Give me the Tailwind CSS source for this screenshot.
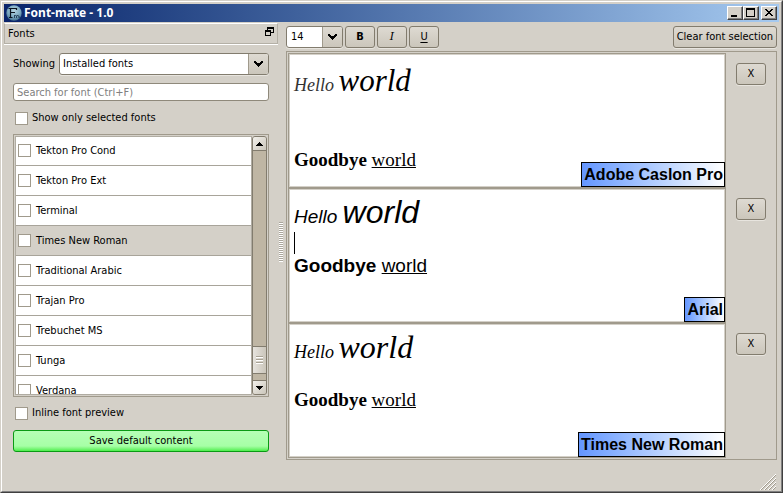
<!DOCTYPE html>
<html lang="en">
<head>
<meta charset="utf-8">
<meta name="viewport" content="width=device-width, initial-scale=1">
<title>Font-mate - 1.0</title>
<script src="https://cdn.jsdelivr.net/npm/@tailwindcss/browser@4"></script>
</head>
<body class="h-screen overflow-hidden bg-[#d4d0c8] font-['DejaVu_Sans_Condensed','DejaVu_Sans',sans-serif] text-[11px] leading-[14px] text-black">
<div class="flex h-full flex-col border border-t-[#d4d0c8] border-r-[#404040] border-b-[#404040] border-l-[#d4d0c8]">
<div class="flex min-h-0 flex-1 flex-col border border-t-white border-r-[#808080] border-b-[#808080] border-l-white px-[2px] pt-[2px]">

  <header class="flex h-[18px] shrink-0 items-center bg-linear-to-r from-[#0a246a] to-[#a6caf0] pr-[2px] pl-[2px]">
    <svg class="h-4 w-4 shrink-0" viewBox="0 0 16 16" aria-hidden="true">
      <defs><radialGradient id="orb" cx="50%" cy="35%" r="65%"><stop offset="0" stop-color="#b4d2e0"/><stop offset="0.6" stop-color="#7eabc2"/><stop offset="1" stop-color="#44708f"/></radialGradient></defs>
      <circle cx="8" cy="8" r="7.7" fill="url(#orb)"/>
      <path d="M2.500 3.500H10.500M4.500 3.500V12.500M3 12.500H6.500M4.500 7.500H9M10.500 3V5" fill="none" stroke="#0b1420" stroke-width="1.200"/>
      <path d="M8.500 13V10M8.500 11Q10 9.500 10.500 11V13M10.500 11Q12.500 9.500 12.800 11V12.500L14 12" fill="none" stroke="#16304a" stroke-width="0.800"/>
    </svg>
    <h1 class="ml-[2px] flex-1 font-['Noto_Sans',sans-serif] text-[12px] leading-[18px] font-bold text-white">Font-mate - 1.0</h1>
    <button aria-label="Minimize" class="flex h-[14px] w-4 items-center justify-center border border-t-white border-r-[#404040] border-b-[#404040] border-l-white bg-[#d4d0c8] shadow-[inset_-1px_-1px_#808080]">
      <svg class="h-3 w-[14px]" viewBox="0 0 14 12"><path d="M3 8h6v2H3z"/></svg></button>
    <button aria-label="Maximize" class="flex h-[14px] w-4 items-center justify-center border border-t-white border-r-[#404040] border-b-[#404040] border-l-white bg-[#d4d0c8] shadow-[inset_-1px_-1px_#808080]">
      <svg class="h-3 w-[14px]" viewBox="0 0 14 12"><path fill-rule="evenodd" d="M2 1h9v9H2zM3 3v6h7V3z"/></svg></button>
    <button aria-label="Close" class="ml-[2px] flex h-[14px] w-4 items-center justify-center border border-t-white border-r-[#404040] border-b-[#404040] border-l-white bg-[#d4d0c8] shadow-[inset_-1px_-1px_#808080]">
      <svg class="h-3 w-[14px]" viewBox="0 0 14 12" shape-rendering="crispEdges"><path d="M3 2h2v1h1v1h2V3h1V2h2v1h-1v1H9v1H8v1h1v1h1v1h1v1H9V8H8V7H6v1H5v1H3V8h1V7h1V6h1V5H5V4H4V3H3z"/></svg></button>
  </header>

  <div class="flex min-h-0 flex-1 pt-px">
    <aside class="flex w-[274px] shrink-0 flex-col">
      <div class="flex h-[21px] shrink-0 items-center justify-between border border-[#b4b0a6] border-t-white pr-[3px] pl-[3px] shadow-[0_1px_white]">
        <h2>Fonts</h2>
        <button aria-label="Float panel" class="pb-1"><svg class="h-[9px] w-[9px]" viewBox="0 0 9 9" shape-rendering="crispEdges"><path fill-rule="evenodd" d="M2 0h7v6H6V5h2V2H3v1H2zM0 3h6v6H0zM1 5v3h4V5z"/></svg></button>
      </div>

      <div class="flex min-h-0 flex-1 flex-col px-[9px] pt-[9px] pb-[39px]">
        <div class="flex h-[22px] shrink-0 items-center">
          <label for="showing" class="w-[46px] shrink-0">Showing</label>
          <div class="relative h-full flex-1">
            <select id="showing" class="h-full w-full appearance-none rounded-[3px] border border-[#827c6e] bg-white pr-6 pl-[3px] text-[11px] shadow-[0_1px_#e8e5df]"><option>Installed fonts</option></select>
            <span class="pointer-events-none absolute inset-y-px right-px flex w-5 items-center justify-center rounded-r-[2px] border-l border-[#a09a8c] bg-linear-to-b from-[#dedad2] to-[#cbc6bb]"><svg class="h-[6px] w-[9px]" viewBox="0 0 9 6" shape-rendering="crispEdges"><path d="M0 0h2v1h1v1h3V1h1V0h2v2H8v1H7v1H6v1H5v1H4V5H3V4H2V3H1V2H0z"/></svg></span>
          </div>
        </div>

        <input type="search" aria-label="Search for font" placeholder="Search for font (Ctrl+F)" class="mt-2 h-[18px] shrink-0 appearance-none rounded-[3px] border border-[#8f897b] bg-white px-[3px] text-[11px] placeholder:text-[#808080]">

        <label class="mt-[10px] flex h-[14px] shrink-0 items-center gap-1 pl-[2px]"><input type="checkbox" class="h-[13px] w-[13px] appearance-none border border-[#a09a8c] bg-white checked:bg-[#6f9bff]">Show only selected fonts</label>

        <div class="mt-[9px] flex min-h-0 flex-1 border border-[#a09a8c] p-px">
          <ul class="min-h-0 flex-1 overflow-hidden border border-[#b0aca2] bg-white">
            <li class="h-[29px] border-b border-[#a8a49a]"><label class="flex h-[27px] items-center gap-[5px] pl-[2px]"><input type="checkbox" class="h-[13px] w-[13px] appearance-none border border-[#a09a8c] bg-white checked:bg-[#6f9bff]">Tekton Pro Cond</label></li>
            <li class="h-[30px] border-b border-[#a8a49a]"><label class="flex h-[29px] items-center gap-[5px] pl-[2px]"><input type="checkbox" class="h-[13px] w-[13px] appearance-none border border-[#a09a8c] bg-white checked:bg-[#6f9bff]">Tekton Pro Ext</label></li>
            <li class="h-[30px] border-b border-[#a8a49a]"><label class="flex h-[29px] items-center gap-[5px] pl-[2px]"><input type="checkbox" class="h-[13px] w-[13px] appearance-none border border-[#a09a8c] bg-white checked:bg-[#6f9bff]">Terminal</label></li>
            <li class="h-[30px] border-b border-[#a8a49a] bg-[#d4d0c8]"><label class="flex h-[29px] items-center gap-[5px] pl-[2px]"><input type="checkbox" class="h-[13px] w-[13px] appearance-none border border-[#a09a8c] bg-white checked:bg-[#6f9bff]">Times New Roman</label></li>
            <li class="h-[30px] border-b border-[#a8a49a]"><label class="flex h-[29px] items-center gap-[5px] pl-[2px]"><input type="checkbox" class="h-[13px] w-[13px] appearance-none border border-[#a09a8c] bg-white checked:bg-[#6f9bff]">Traditional Arabic</label></li>
            <li class="h-[30px] border-b border-[#a8a49a]"><label class="flex h-[29px] items-center gap-[5px] pl-[2px]"><input type="checkbox" class="h-[13px] w-[13px] appearance-none border border-[#a09a8c] bg-white checked:bg-[#6f9bff]">Trajan Pro</label></li>
            <li class="h-[30px] border-b border-[#a8a49a]"><label class="flex h-[29px] items-center gap-[5px] pl-[2px]"><input type="checkbox" class="h-[13px] w-[13px] appearance-none border border-[#a09a8c] bg-white checked:bg-[#6f9bff]">Trebuchet MS</label></li>
            <li class="h-[30px] border-b border-[#a8a49a]"><label class="flex h-[29px] items-center gap-[5px] pl-[2px]"><input type="checkbox" class="h-[13px] w-[13px] appearance-none border border-[#a09a8c] bg-white checked:bg-[#6f9bff]">Tunga</label></li>
            <li class="h-[30px] border-b border-[#a8a49a]"><label class="flex h-[29px] items-center gap-[5px] pl-[2px]"><input type="checkbox" class="h-[13px] w-[13px] appearance-none border border-[#a09a8c] bg-white checked:bg-[#6f9bff]">Verdana</label></li>
          </ul>
          <div class="flex w-[15px] shrink-0 flex-col rounded-[3px] border border-[#827c6e] bg-[#bfb6a4]">
            <button aria-label="Scroll up" class="flex h-[14px] shrink-0 items-center justify-center rounded-t-[2px] border-b border-[#827c6e] bg-linear-to-br from-[#f2f0eb] to-[#cbc6bb]"><svg class="h-1 w-[7px]" viewBox="0 0 7 4" shape-rendering="crispEdges"><path d="M3 0h1v1h1v1h1v1h1v1H0V3h1V2h1V1h1z"/></svg></button>
            <div class="flex-1"></div>
            <div class="flex h-7 shrink-0 flex-col items-center justify-center gap-px border-y border-[#827c6e] bg-linear-to-r from-[#e6e3dd] to-[#cbc6bb]">
              <i class="h-[2px] w-[7px] border-t border-[#a8a294] bg-white"></i><i class="h-[2px] w-[7px] border-t border-[#a8a294] bg-white"></i><i class="h-[2px] w-[7px] border-t border-[#a8a294] bg-white"></i>
            </div>
            <div class="h-[6px] shrink-0"></div>
            <button aria-label="Scroll down" class="flex h-[14px] shrink-0 items-center justify-center rounded-b-[2px] border-t border-[#827c6e] bg-linear-to-br from-[#f2f0eb] to-[#cbc6bb]"><svg class="h-1 w-[7px]" viewBox="0 0 7 4" shape-rendering="crispEdges"><path d="M0 0h7v1H6v1H5v1H4v1H3V3H2V2H1V1H0z"/></svg></button>
          </div>
        </div>

        <label class="mt-[9px] flex h-[14px] shrink-0 items-center gap-1 pl-[2px]"><input type="checkbox" class="h-[13px] w-[13px] appearance-none border border-[#a09a8c] bg-white checked:bg-[#6f9bff]">Inline font preview</label>
        <button class="mt-[10px] h-[22px] shrink-0 rounded-[3px] border border-[#0a9a14] bg-linear-to-b from-[#b6ffb6] from-0% via-[#a6ffa6] via-75% to-[#48ee48] to-100%">Save default content</button>
      </div>
    </aside>

    <div class="flex w-2 shrink-0 items-center pb-[30px] pl-px" role="separator" aria-label="Resize panel">
      <svg class="h-10 w-1" viewBox="0 0 4 40" shape-rendering="crispEdges"><defs><pattern id="grip" width="4" height="2" patternUnits="userSpaceOnUse"><path d="M0 0h4v1H0z" fill="#aaa69c"/><path d="M0 1h4v1H0z" fill="#fff"/></pattern></defs><path d="M0 0h4v40H0z" fill="url(#grip)"/></svg>
    </div>

    <main class="flex min-w-0 flex-1 flex-col pt-[3px] pr-[2px]">
      <div class="flex h-[22px] shrink-0 gap-[2px]">
        <div class="relative w-[57px]">
          <select aria-label="Font size" class="h-full w-full appearance-none rounded-[3px] border border-[#827c6e] bg-white pr-5 pl-1 text-[11px] shadow-[0_1px_#e8e5df]"><option>14</option></select>
          <span class="pointer-events-none absolute inset-y-px right-px flex w-5 items-center justify-center rounded-r-[2px] border-l border-[#a09a8c] bg-linear-to-b from-[#dedad2] to-[#cbc6bb]"><svg class="h-[6px] w-[9px]" viewBox="0 0 9 6" shape-rendering="crispEdges"><path d="M0 0h2v1h1v1h3V1h1V0h2v2H8v1H7v1H6v1H5v1H4V5H3V4H2V3H1V2H0z"/></svg></span>
        </div>
        <button aria-label="Bold" class="w-[30px] rounded-[3px] border border-[#827c6e] bg-linear-to-b from-[#dedad2] to-[#cbc6bb] font-bold shadow-[0_1px_#e8e5df]">B</button>
        <button aria-label="Italic" class="w-[30px] rounded-[3px] border border-[#827c6e] bg-linear-to-b from-[#dedad2] to-[#cbc6bb] font-['DejaVu_Serif',serif] italic shadow-[0_1px_#e8e5df]">I</button>
        <button aria-label="Underline" class="w-[30px] rounded-[3px] border border-[#827c6e] bg-linear-to-b from-[#dedad2] to-[#cbc6bb] underline underline-offset-2 shadow-[0_1px_#e8e5df]">U</button>
        <button class="ml-auto rounded-[3px] border border-[#827c6e] bg-linear-to-b from-[#dedad2] to-[#cbc6bb] px-[3px] shadow-[0_1px_#e8e5df]">Clear font selection</button>
      </div>

      <div class="mt-[3px] flex min-h-0 flex-1 flex-col border border-[#a09a8c] p-px">
        <section class="flex min-h-0 flex-1">
          <div class="relative flex min-w-0 flex-1 border border-[#a09a8c]">
            <div contenteditable="true" role="textbox" aria-label="Adobe Caslon Pro preview" class="flex-1 border border-[#d4d0c8] bg-white px-1 pt-1 font-['Liberation_Serif',serif] text-[19px] outline-none">
              <p class="h-[50px] text-[18px] leading-[43px] italic"><span class="text-[#333]">Hello</span> <span class="text-[31px]">world</span></p>
              <p class="h-10 leading-10"><br></p>
              <p class="leading-[22px]"><b>Goodbye</b> <u>world</u></p>
            </div>
            <span class="absolute right-0 bottom-0 border border-black bg-linear-to-r from-[#6496ff] to-white pr-px pl-[2px] font-['Liberation_Sans',sans-serif] text-[16px] leading-[23px] font-bold">Adobe Caslon Pro</span>
          </div>
          <button aria-label="Remove Adobe Caslon Pro" class="mt-[10px] mr-[9px] ml-[10px] h-[22px] w-[30px] rounded-[3px] border border-[#827c6e] bg-linear-to-b from-[#dedad2] to-[#cbc6bb] shadow-[0_1px_#e8e5df]">X</button>
        </section>
        <section class="flex min-h-0 flex-1">
          <div class="relative flex min-w-0 flex-1 border border-[#a09a8c]">
            <div contenteditable="true" role="textbox" aria-label="Arial preview" class="flex-1 border border-[#d4d0c8] bg-white px-1 pt-1 font-['Liberation_Sans',sans-serif] text-[19px] outline-none">
              <p class="h-[38px] leading-[37px] italic">Hello <span class="text-[32px]">world</span></p>
              <p class="h-[22px] border-l border-black leading-[22px]"><br></p>
              <p class="leading-[24px]"><b>Goodbye</b> <u>world</u></p>
            </div>
            <span class="absolute right-0 bottom-0 border border-black bg-linear-to-r from-[#6496ff] to-white pr-px pl-[2px] font-['Liberation_Sans',sans-serif] text-[16px] leading-[23px] font-bold">Arial</span>
          </div>
          <button aria-label="Remove Arial" class="mt-[10px] mr-[9px] ml-[10px] h-[22px] w-[30px] rounded-[3px] border border-[#827c6e] bg-linear-to-b from-[#dedad2] to-[#cbc6bb] shadow-[0_1px_#e8e5df]">X</button>
        </section>
        <section class="flex min-h-0 flex-1">
          <div class="relative flex min-w-0 flex-1 border border-[#a09a8c]">
            <div contenteditable="true" role="textbox" aria-label="Times New Roman preview" class="flex-1 border border-[#d4d0c8] bg-white px-1 pt-1 font-['Liberation_Serif',serif] text-[19px] outline-none">
              <p class="h-[38px] text-[18px] leading-[37px] italic">Hello <span class="text-[32px]">world</span></p>
              <p class="h-[22px] leading-[22px]"><br></p>
              <p class="leading-[22px]"><b>Goodbye</b> <u>world</u></p>
            </div>
            <span class="absolute right-0 bottom-0 border border-black bg-linear-to-r from-[#6496ff] to-white pr-px pl-[2px] font-['Liberation_Sans',sans-serif] text-[16px] leading-[23px] font-bold">Times New Roman</span>
          </div>
          <button aria-label="Remove Times New Roman" class="mt-[10px] mr-[9px] ml-[10px] h-[22px] w-[30px] rounded-[3px] border border-[#827c6e] bg-linear-to-b from-[#dedad2] to-[#cbc6bb] shadow-[0_1px_#e8e5df]">X</button>
        </section>
      </div>
      <footer class="flex h-[31px] shrink-0 items-end justify-end">
        <svg class="h-[18px] w-[18px]" viewBox="0 0 18 18" fill="none" aria-hidden="true"><path d="M1 17L17 1M5 17L17 5M9 17L17 9M13 17L17 13" stroke="#fff"/><path d="M2 17L17 2M6 17L17 6M10 17L17 10M14 17L17 14" stroke="#a09a8c"/></svg>
      </footer>
    </main>
  </div>
</div>
</div>
</body>
</html>
